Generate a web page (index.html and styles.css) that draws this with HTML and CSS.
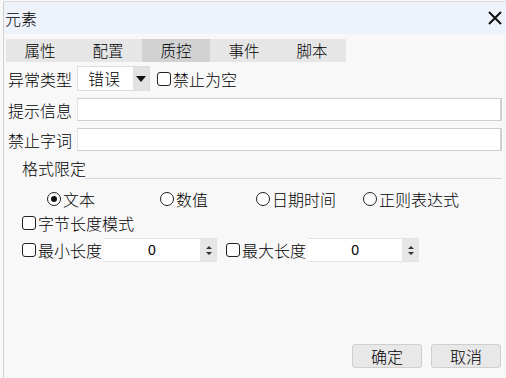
FILE: index.html
```html
<!DOCTYPE html>
<html lang="zh">
<head>
<meta charset="utf-8">
<title>元素</title>
<link rel="stylesheet" href="styles.css">
</head>
<body>
<div class="window">
  <div class="titlebar">
    <span class="title">元素</span>
    <svg class="close" width="14" height="14" viewBox="0 0 14 14"><path d="M1 1L13 13M13 1L1 13" stroke="#111" stroke-width="2" fill="none"/></svg>
  </div>
  <div class="tabs">
    <div class="tab">属性</div>
    <div class="tab">配置</div>
    <div class="tab active">质控</div>
    <div class="tab">事件</div>
    <div class="tab">脚本</div>
  </div>
  <div class="content">
    <div class="row row-first">
      <span class="label">异常类型</span>
      <div class="select">
        <span class="select-value">错误</span>
        <span class="select-btn"><svg width="10" height="6" viewBox="0 0 10 6"><path d="M0 0H10L5 6Z" fill="#111"/></svg></span>
      </div>
      <span class="check"></span><span class="text">禁止为空</span>
    </div>
    <div class="row row-input">
      <span class="label">提示信息</span>
      <div class="input"></div>
    </div>
    <div class="row row-input">
      <span class="label">禁止字词</span>
      <div class="input"></div>
    </div>
    <div class="group-head">
      <span class="group-title">格式限定</span>
      <span class="group-line"></span>
    </div>
    <div class="radios">
      <div class="radio-item"><span class="radio checked"></span><span class="text">文本</span></div>
      <div class="radio-item"><span class="radio"></span><span class="text">数值</span></div>
      <div class="radio-item"><span class="radio"></span><span class="text">日期时间</span></div>
      <div class="radio-item"><span class="radio"></span><span class="text">正则表达式</span></div>
    </div>
    <div class="row row-check">
      <span class="check"></span><span class="text">字节长度模式</span>
    </div>
    <div class="row row-spin">
      <span class="check"></span><span class="text">最小长度</span>
      <div class="spin">
        <span class="spin-value">0</span>
        <span class="spin-btn"><svg width="6" height="11" viewBox="0 0 6 11"><path d="M0 4H6L3 1Z M0 7H6L3 10Z" fill="#333"/></svg></span>
      </div>
      <span class="check check-gap"></span><span class="text">最大长度</span>
      <div class="spin spin-max">
        <span class="spin-value">0</span>
        <span class="spin-btn"><svg width="6" height="11" viewBox="0 0 6 11"><path d="M0 4H6L3 1Z M0 7H6L3 10Z" fill="#333"/></svg></span>
      </div>
    </div>
  </div>
  <div class="footer">
    <button class="btn">确定</button>
    <button class="btn">取消</button>
  </div>
</div>
</body>
</html>
```
FILE: styles.css
```css
* { box-sizing: border-box; }
html, body { margin: 0; padding: 0; }
body {
  background: #f8f8f8;
  padding-left: 3px;
  padding-top: 1px;
  font-family: "Noto Sans CJK SC", "Noto Sans", sans-serif;
  font-size: 16px;
  font-weight: 300;
  color: #000;
  overflow: hidden;
}
.window {
  height: 377px;
  border-left: 1px solid #cfcfcf;
  border-top: 1px solid #dcdcdc;
  display: flex;
  flex-direction: column;
}
.titlebar {
  height: 32px;
  background: #eef2fa;
  display: flex;
  align-items: center;
  justify-content: space-between;
  padding-left: 1px;
  padding-right: 4px;
}
.title { line-height: 20px; }
.close { display: block; margin-top: -1px; }
.tabs {
  margin-top: 5px;
  margin-left: 2px;
  display: flex;
  width: 340px;
  height: 23px;
  background: #e6e6e6;
}
.tab {
  width: 68px;
  text-align: center;
  line-height: 23px;
  font-size: 15.5px;
}
.tab.active { background: #d2d2d2; }
.content {
  padding-left: 4px;
  padding-right: 4px;
}
.row {
  display: flex;
  align-items: center;
}
.label {
  width: 64px;
  margin-right: 5px;
  white-space: nowrap;
  line-height: 20px;
}
.text { white-space: nowrap; line-height: 20px; }
.row-first { margin-top: 4px; height: 25px; }
.select {
  width: 73px;
  height: 25px;
  display: flex;
  background: #fff;
  border: 1px solid #dddddd;
}
.select-value {
  flex: 1;
  padding-left: 10px;
  line-height: 23px;
}
.select-btn {
  width: 16px;
  background: #e2e2e2;
  display: flex;
  align-items: center;
  justify-content: center;
}
.check {
  width: 14px;
  height: 14px;
  border: 1px solid #222;
  border-radius: 3px;
  background: #fff;
  flex: none;
  margin-right: 2px;
}
.row-first .check { margin-left: 7px; }
.row-input { margin-top: 7px; height: 23px; }
.input {
  flex: 1;
  height: 23px;
  background: #fff;
  border: 1px solid #cfcfcf;
  border-right: 2px solid #cfcfcf;
  border-left-color: #e4e4e4;
}
.group-head {
  margin-top: 8px;
  height: 20px;
  display: flex;
  align-items: flex-end;
}
.group-title {
  padding-left: 14px;
  width: 77px;
  line-height: 20px;
  white-space: nowrap;
  margin-bottom: 1px;
}
.group-line {
  flex: 1;
  border-bottom: 1px solid #d8d8d8;
}
.radios {
  margin-top: 10px;
  height: 20px;
  display: grid;
  grid-template-columns: 113px 96px 107px auto;
  padding-left: 39px;
}
.radio-item { display: flex; align-items: center; }
.radio {
  width: 14px;
  height: 14px;
  border: 1px solid #222;
  border-radius: 50%;
  margin-right: 2px;
  background: #fff;
  display: flex;
  align-items: center;
  justify-content: center;
}
.radio.checked::after {
  content: "";
  width: 6px;
  height: 6px;
  border-radius: 50%;
  background: #111;
}
.row-check { margin-top: 4px; height: 20px; padding-left: 14px; }
.row-spin { margin-top: 5px; height: 24px; padding-left: 14px; }
.spin {
  width: 113px;
  height: 24px;
  margin-left: 2px;
  display: flex;
  background: #fff;
  border-top: 1px solid #e4e4e4;
  border-bottom: 1px solid #e4e4e4;
}
.spin-max { width: 111px; }
.spin-value {
  flex: 1;
  text-align: center;
  line-height: 22px;
  font-family: "Liberation Sans", sans-serif;
  font-weight: 400;
  font-size: 14px;
}
.spin-btn {
  width: 17px;
  background: #e6e6e6;
  display: flex;
  align-items: center;
  justify-content: center;
}
.check-gap { margin-left: 9px; }
.footer {
  margin-top: auto;
  padding-bottom: 10px;
  display: flex;
  justify-content: flex-end;
  gap: 9px;
  padding-right: 5px;
}
.btn {
  width: 70px;
  height: 24px;
  background: #e8e8e8;
  border: 1px solid #cfcfcf;
  border-radius: 3px;
  font-family: "Noto Sans CJK SC", sans-serif;
  font-weight: 300;
  font-size: 16px;
  color: #000;
  padding: 0;
  line-height: 22px;
}
```
